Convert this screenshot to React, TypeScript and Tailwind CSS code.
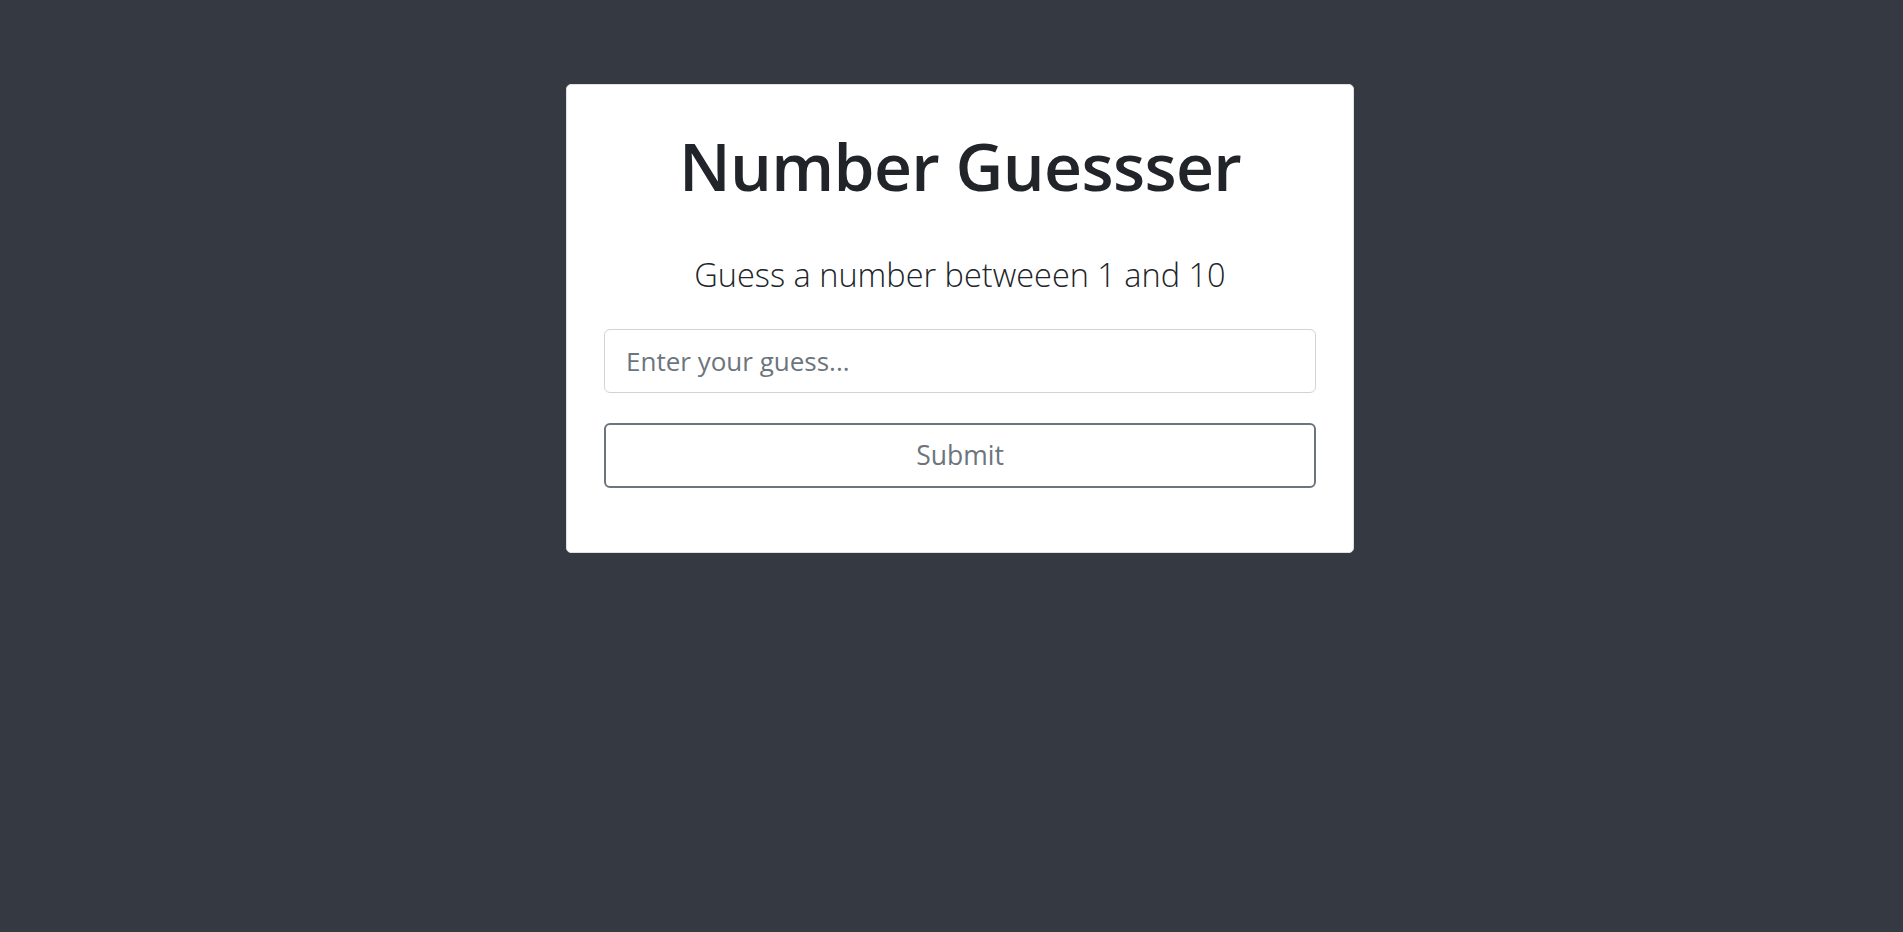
import React from 'react';

const App = () => {
  const [guess, setGuess] = React.useState('');

  return (
    <main
      className="min-h-screen w-full bg-[#353a42] pt-[84px] pl-[17px] flex justify-center items-start"
      style={{ fontFamily: '"Open Sans", "Noto Sans", sans-serif' }}
    >
      <article className="w-[788px] bg-white border border-[#dee2e6] rounded-[5px] px-[37px] pt-[41px] pb-[64px]">
        <h1 className="text-center text-[66px] leading-[1.2] font-semibold text-[#212529] tracking-[-0.01em]">
          Number Guessser
        </h1>
        <p className="mt-[46px] text-center text-[32.5px] leading-[1.5] font-light text-[#212529]">
          Guess a number betweeen 1 and 10
        </p>
        <form
          className="mt-[29px] flex flex-col gap-[30px]"
          onSubmit={(e) => e.preventDefault()}
        >
          <input
            type="text"
            placeholder="Enter your guess..."
            value={guess}
            onChange={(e) => setGuess(e.target.value)}
            className="h-[64px] w-full border border-[#ced4da] rounded-[6px] px-[21px] text-[26px] text-[#495057] placeholder-[#6c757d] focus:outline-none"
          />
          <button
            type="submit"
            className="h-[65px] w-full border-2 border-[#6c757d] rounded-[6px] text-[26.5px] text-[#6c757d] bg-white"
          >
            Submit
          </button>
        </form>
      </article>
    </main>
  );
};

export default App;
